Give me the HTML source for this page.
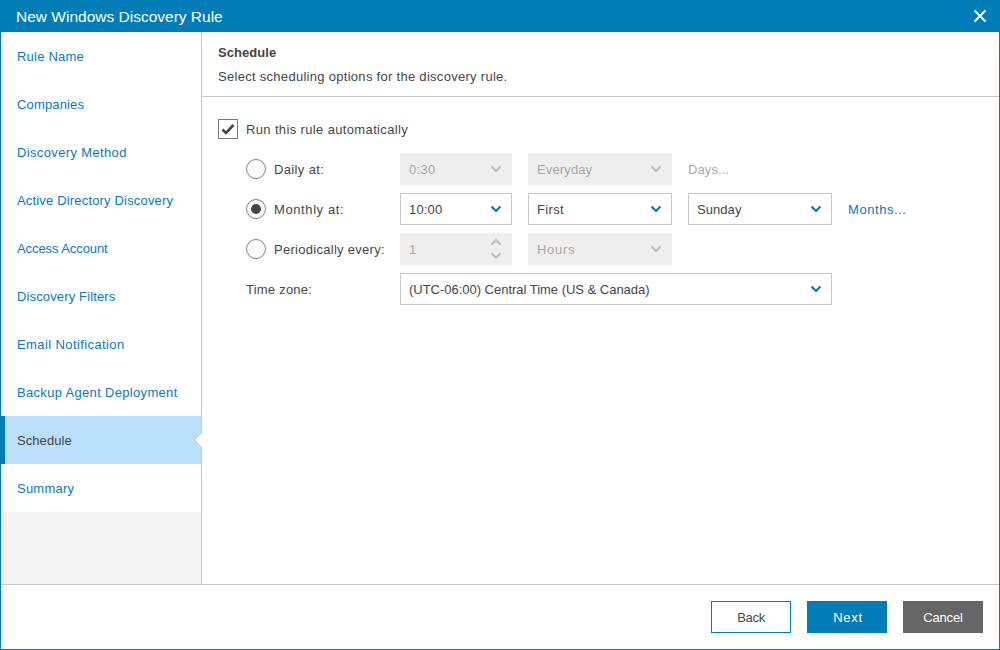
<!DOCTYPE html>
<html><head><meta charset="utf-8">
<style>
*{box-sizing:border-box;margin:0;padding:0}
html,body{width:1000px;height:650px;overflow:hidden;background:#fff;font-family:"Liberation Sans",sans-serif;font-size:13px;color:#464646}
.frame{position:absolute;left:0;top:0;width:1000px;height:650px;border:1px solid #007cb7;border-top:none}
.hdr{position:absolute;left:0;top:0;width:1000px;height:32px;background:#007cb7;color:#fff}
.hdr .t{position:absolute;left:16px;top:7px;font-size:15.5px;line-height:18px;white-space:nowrap;letter-spacing:0px}
.hdr .x{position:absolute;left:973px;top:9px}
.side{position:absolute;left:1px;top:32px;width:200px;height:552px;background:#f4f4f4}
.side .it{position:absolute;left:0;width:200px;height:48px;background:#fff;color:#0a78b8;padding-left:16px;line-height:50px;white-space:nowrap}
.side .sel{background:#bae0fb;color:#464646}
.side .sel:before{content:"";position:absolute;left:0;top:0;width:4px;height:48px;background:#007cb7}
.vline{position:absolute;left:201px;top:32px;width:1px;height:552px;background:#c8c8c8}
.hline{position:absolute;left:202px;top:96px;width:797px;height:1px;background:#c8c8c8}
.fline{position:absolute;left:1px;top:584px;width:998px;height:1px;background:#c8c8c8}
.abs{position:absolute;line-height:16px;white-space:nowrap}
.box{position:absolute;height:32px;border:1px solid #c8c8c8;background:#fff;line-height:32px;padding-left:8px;color:#464646;white-space:nowrap}
.dis{background:#eeeeee;border-color:#eeeeee;color:#a8a8a8}
.chev{position:absolute;right:9px;overflow:visible}
.radio{position:absolute;width:20px;height:20px;border:1px solid #808080;border-radius:50%;background:#fff}
.radio .dot{position:absolute;left:4px;top:4px;width:10px;height:10px;border-radius:50%;background:#464646}
.cb{position:absolute;left:218px;top:119px;width:20px;height:20px;border:1px solid #7a7a7a;background:#fff}
.cb svg{position:absolute;left:-1px;top:-1px}
.btn{position:absolute;top:601px;width:80px;height:32px;line-height:32px;text-align:center;white-space:nowrap}
</style></head><body>
<div class="hdr"><div class="t" style="top:7.5px">New Windows Discovery Rule</div>
<svg class="x" width="14" height="14" viewBox="0 0 14 14"><path d="M1.5 1.5L12.5 12.5M12.5 1.5L1.5 12.5" stroke="#fff" stroke-width="1.9"/></svg></div>
<div class="frame"></div>
<div class="side">
<div class="it" style="top:0px"><span style="letter-spacing:0.210px;">Rule Name</span></div>
<div class="it" style="top:48px"><span style="letter-spacing:0.150px;">Companies</span></div>
<div class="it" style="top:96px"><span style="letter-spacing:0.360px;">Discovery Method</span></div>
<div class="it" style="top:144px"><span style="letter-spacing:0.170px;">Active Directory Discovery</span></div>
<div class="it" style="top:192px"><span style="letter-spacing:-0.080px;">Access Account</span></div>
<div class="it" style="top:240px"><span style="letter-spacing:0.140px;">Discovery Filters</span></div>
<div class="it" style="top:288px"><span style="letter-spacing:0.400px;">Email Notification</span></div>
<div class="it" style="top:336px"><span style="letter-spacing:0.320px;">Backup Agent Deployment</span></div>
<div class="it sel" style="top:384px"><span style="letter-spacing:0.070px;">Schedule</span></div>
<div class="it" style="top:432px"><span style="letter-spacing:0.230px;">Summary</span></div>
</div>
<div class="vline"></div>
<div class="hline"></div>
<div class="fline"></div>
<svg style="position:absolute;left:190px;top:428px" width="14" height="24" viewBox="0 0 14 24"><path d="M12 0V4.5L4.5 12L12 19.5V24H14V0Z" fill="#fff"/><path d="M11.5 4.5L4.5 12L11.5 19.5" fill="none" stroke="#c8c8c8" stroke-width="1"/></svg>
<div class="abs" style="left:218px;top:45px;font-weight:bold;letter-spacing:0.060px;">Schedule</div>
<div class="abs" style="left:218px;top:69px;letter-spacing:0.290px;">Select scheduling options for the discovery rule.</div>

<div class="cb"><svg width="20" height="20" viewBox="0 0 20 20"><path d="M4.5 10.5L8 14L15.5 6" fill="none" stroke="#464646" stroke-width="2.6"/></svg></div>
<div class="abs" style="left:246px;top:122px;letter-spacing:0.360px;">Run this rule automatically</div>

<div class="radio" style="left:246px;top:159px"></div>
<div class="abs" style="left:274px;top:162px;letter-spacing:0.360px;">Daily at:</div>
<div class="radio" style="left:246px;top:199px"><div class="dot"></div></div>
<div class="abs" style="left:274px;top:202px;letter-spacing:0.600px;">Monthly at:</div>
<div class="radio" style="left:246px;top:239px"></div>
<div class="abs" style="left:274px;top:242px;letter-spacing:0.280px;">Periodically every:</div>
<div class="abs" style="left:246px;top:282px;letter-spacing:0.230px;">Time zone:</div>

<div class="box dis" style="left:400px;top:153px;width:112px"><span style="letter-spacing:0.300px;">0:30</span><svg class="chev" style="top:11px" width="12" height="8" viewBox="0 0 12 8"><path d="M1.5 1.5L6 6L10.5 1.5" fill="none" stroke="#bfbfbf" stroke-width="2.0"/></svg></div>
<div class="box dis" style="left:528px;top:153px;width:144px"><span style="letter-spacing:0.130px;">Everyday</span><svg class="chev" style="top:11px" width="12" height="8" viewBox="0 0 12 8"><path d="M1.5 1.5L6 6L10.5 1.5" fill="none" stroke="#bfbfbf" stroke-width="2.0"/></svg></div>
<div class="abs" style="left:688px;top:162px;color:#a8a8a8;letter-spacing:0.120px;">Days...</div>

<div class="box" style="left:400px;top:193px;width:112px"><span style="letter-spacing:0.170px;">10:00</span><svg class="chev" style="top:11px" width="12" height="8" viewBox="0 0 12 8"><path d="M1.5 1.5L6 6L10.5 1.5" fill="none" stroke="#007cb7" stroke-width="2.0"/></svg></div>
<div class="box" style="left:528px;top:193px;width:144px"><span style="letter-spacing:0.330px;">First</span><svg class="chev" style="top:11px" width="12" height="8" viewBox="0 0 12 8"><path d="M1.5 1.5L6 6L10.5 1.5" fill="none" stroke="#007cb7" stroke-width="2.0"/></svg></div>
<div class="box" style="left:688px;top:193px;width:144px"><span style="letter-spacing:0.060px;">Sunday</span><svg class="chev" style="top:11px" width="12" height="8" viewBox="0 0 12 8"><path d="M1.5 1.5L6 6L10.5 1.5" fill="none" stroke="#007cb7" stroke-width="2.0"/></svg></div>
<div class="abs" style="left:848px;top:202px;color:#0a78b8;letter-spacing:0.560px;">Months...</div>

<div class="box dis" style="left:400px;top:233px;width:112px"><span>1</span><svg class="chev" style="top:5px" width="12" height="8" viewBox="0 0 12 8"><path d="M1.5 5.5L6 1L10.5 5.5" fill="none" stroke="#bfbfbf" stroke-width="2"/></svg><svg class="chev" style="top:18px" width="12" height="8" viewBox="0 0 12 8"><path d="M1.5 1.2L6 5.7L10.5 1.2" fill="none" stroke="#bfbfbf" stroke-width="2"/></svg></div>
<div class="box dis" style="left:528px;top:233px;width:144px"><span style="letter-spacing:0.700px;">Hours</span><svg class="chev" style="top:11px" width="12" height="8" viewBox="0 0 12 8"><path d="M1.5 1.5L6 6L10.5 1.5" fill="none" stroke="#bfbfbf" stroke-width="2.0"/></svg></div>

<div class="box" style="left:400px;top:273px;width:432px"><span style="letter-spacing:-0.020px;">(UTC-06:00) Central Time (US &amp; Canada)</span><svg class="chev" style="top:11px" width="12" height="8" viewBox="0 0 12 8"><path d="M1.5 1.5L6 6L10.5 1.5" fill="none" stroke="#007cb7" stroke-width="2.0"/></svg></div>

<div class="btn" style="left:711px;border:1px solid #007cb7;color:#464646;background:#fff;letter-spacing:-0.300px;">Back</div>
<div class="btn" style="left:807px;border:1px solid #007cb7;background:#007cb7;color:#fff;padding-left:2px;letter-spacing:0.690px;">Next</div>
<div class="btn" style="left:903px;border:1px solid #666;background:#666;color:#fff;letter-spacing:-0.170px;">Cancel</div>
</body></html>
